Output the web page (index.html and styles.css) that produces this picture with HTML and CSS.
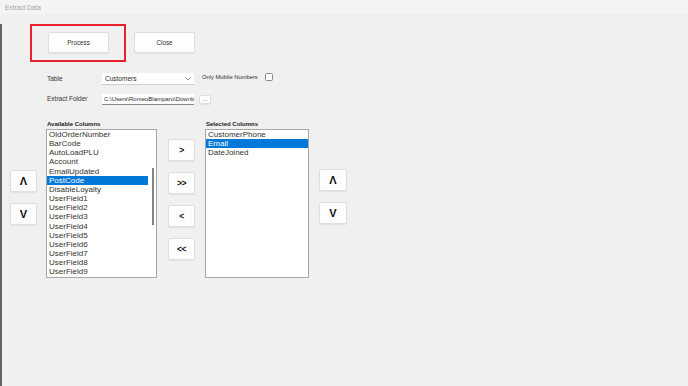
FILE: index.html
```html
<!DOCTYPE html>
<html lang="en">
<head>
    <meta charset="UTF-8">
    <meta name="viewport" content="width=device-width, initial-scale=1.0">
    <title>Extract Data</title>
    <link rel="stylesheet" href="styles.css">
</head>
<body>
    <div class="titlebar">Extract Data</div>

    <div class="window">
        <div class="toolbar">
            <div class="highlight">
                <button class="btn btn-wide">Process</button>
            </div>
            <button class="btn btn-wide btn-close">Close</button>
        </div>

        <div class="form">
            <div class="form-row">
                <span class="field-label">Table</span>
                <div class="combo">
                    <span>Customers</span>
                    <svg class="chevron" width="6" height="4" viewBox="0 0 6 4">
                        <path d="M0.5 0.5 L3 3 L5.5 0.5" fill="none" stroke="#777" stroke-width="0.8"/>
                    </svg>
                </div>
                <span class="check-label">Only Mobile Numbers</span>
                <span class="checkbox"></span>
            </div>
            <div class="form-row">
                <span class="field-label">Extract Folder</span>
                <div class="textbox"><span class="textbox-value">C:\Users\RomeoBlamparo\Downlc</span></div>
                <button class="btn btn-browse">...</button>
            </div>
        </div>

        <div class="columns">
            <div class="move-buttons move-side">
                <button class="btn btn-move btn-arrow">&Lambda;</button>
                <button class="btn btn-move btn-arrow">V</button>
            </div>

            <div class="list-panel">
                <div class="panel-label">Available Columns</div>
                <div class="listbox listbox-available">
                    <ul class="items">
                        <li>OldOrderNumber</li>
                        <li>BarCode</li>
                        <li>AutoLoadPLU</li>
                        <li>Account</li>
                        <li>EmailUpdated</li>
                        <li class="selected">PostCode</li>
                        <li>DisableLoyalty</li>
                        <li>UserField1</li>
                        <li>UserField2</li>
                        <li>UserField3</li>
                        <li>UserField4</li>
                        <li>UserField5</li>
                        <li>UserField6</li>
                        <li>UserField7</li>
                        <li>UserField8</li>
                        <li>UserField9</li>
                    </ul>
                    <div class="scrollbar"><div class="thumb"></div></div>
                </div>
            </div>

            <div class="move-buttons move-middle">
                <button class="btn btn-move">&gt;</button>
                <button class="btn btn-move">&gt;&gt;</button>
                <button class="btn btn-move">&lt;</button>
                <button class="btn btn-move">&lt;&lt;</button>
            </div>

            <div class="list-panel">
                <div class="panel-label">Selected Columns</div>
                <div class="listbox listbox-selected">
                    <ul class="items">
                        <li>CustomerPhone</li>
                        <li class="selected">Email</li>
                        <li>DateJoined</li>
                    </ul>
                </div>
            </div>

            <div class="move-buttons move-side move-right">
                <button class="btn btn-move btn-arrow">&Lambda;</button>
                <button class="btn btn-move btn-arrow">V</button>
            </div>
        </div>
    </div>
</body>
</html>
```

FILE: styles.css
```css
/* Basic Reset */
* {
    margin: 0;
    padding: 0;
    box-sizing: border-box;
}

body {
    font-family: 'Liberation Sans', Arial, sans-serif;
    color: #2b2b2b;
    background-color: #f0f0f0;
    width: 688px;
    height: 386px;
    overflow: hidden;
}

/* Title bar */
.titlebar {
    height: 14px;
    line-height: 15px;
    padding-left: 5px;
    font-size: 6.5px;
    color: #a3a3a3;
    background-color: #f4f4f4;
}

.window {
    height: 372px;
    border-left: 2px solid #5d646c;
    background-color: #f0f0f0;
}

/* Shared button look */
.btn {
    font-family: 'Liberation Sans', Arial, sans-serif;
    background-color: #fdfdfd;
    border: 1px solid #dedede;
    border-radius: 2px;
    box-shadow: 0 1px 1px rgba(0, 0, 0, 0.06);
    color: #333;
    cursor: pointer;
}

/* Top buttons */
.toolbar {
    display: flex;
    align-items: flex-start;
    margin-top: 10px;
    margin-left: 28px;
}

.highlight {
    border: 2px solid #e8222c; /* red annotation box */
    padding: 6px 15px 7px 16px;
}

.btn-wide {
    display: block;
    width: 61px;
    height: 21px;
    font-size: 6.3px;
}

.btn-close {
    margin-left: 8px;
    margin-top: 8px;
}

/* Form rows */
.form {
    margin-top: 11px;
    margin-left: 45px;
    display: flex;
    flex-direction: column;
    gap: 8px;
}

.form-row {
    display: flex;
    align-items: center;
    height: 12px;
}

.field-label {
    width: 55px;
    margin-top: -1px;
    font-size: 6.5px;
    color: #333;
}

.combo {
    width: 92px;
    height: 12px;
    display: flex;
    align-items: center;
    justify-content: space-between;
    padding: 0 3px 0 3px;
    background-color: #fff;
    border-bottom: 1px solid #cfcfcf;
    font-size: 6.5px;
}

.chevron {
    display: block;
}

.check-label {
    margin-left: 8px;
    margin-top: -4px;
    font-size: 5.8px;
    color: #333;
}

.checkbox {
    width: 8px;
    height: 8px;
    margin-left: 7px;
    margin-top: -4px;
    border: 1px solid #8a8a8a;
    border-radius: 1.5px;
    background-color: #fbfbfb;
}

.textbox {
    width: 92px;
    height: 11px;
    display: flex;
    align-items: center;
    padding-left: 2px;
    background-color: #fff;
    border-bottom: 1px solid #8a8a8a;
    font-size: 6px;
    overflow: hidden;
}

.textbox-value {
    white-space: nowrap;
}

.btn-browse {
    width: 12px;
    height: 9px;
    margin-left: 5px;
    font-size: 6px;
    line-height: 6px;
    padding: 0;
}

/* List area */
.columns {
    display: flex;
    align-items: flex-start;
    margin-top: 15px;
}

.move-buttons {
    display: flex;
    flex-direction: column;
    gap: 11px;
}

.move-side {
    margin-left: 8px;
    padding-top: 50px;
}

.move-middle {
    margin-left: 11px;
    padding-top: 19px;
}

.move-right {
    margin-left: 10px;
    padding-top: 49px;
}

.btn-move {
    width: 27px;
    height: 22px;
    font-size: 8.5px;
    font-weight: bold;
    letter-spacing: -0.5px;
    color: #111;
}

.btn-arrow {
    font-size: 11px;
    letter-spacing: 0;
}

.move-right .btn-move {
    width: 28px;
}

.list-panel {
    margin-left: 9px;
}

.move-middle + .list-panel {
    margin-left: 10px;
}

.panel-label {
    height: 9px;
    line-height: 9px;
    font-size: 6px;
    font-weight: bold;
    color: #222;
    padding-left: 1px;
}

.listbox {
    height: 149px;
    background-color: #fff;
    border: 1px solid #a8a8a8;
    display: flex;
    overflow: hidden;
}

.listbox-available {
    width: 111px;
}

.listbox-selected {
    width: 104px;
}

.items {
    list-style: none;
    flex: 1;
    font-size: 8px;
    line-height: 9.15px;
    color: #333;
}

.items li {
    padding-left: 2px;
    white-space: nowrap;
}

.items li.selected {
    background-color: #0078d7;
    color: #fff;
}

.scrollbar {
    width: 8px;
    padding-top: 38px;
    padding-left: 4px;
}

.thumb {
    width: 2px;
    height: 57px;
    background-color: #858585;
}
```
